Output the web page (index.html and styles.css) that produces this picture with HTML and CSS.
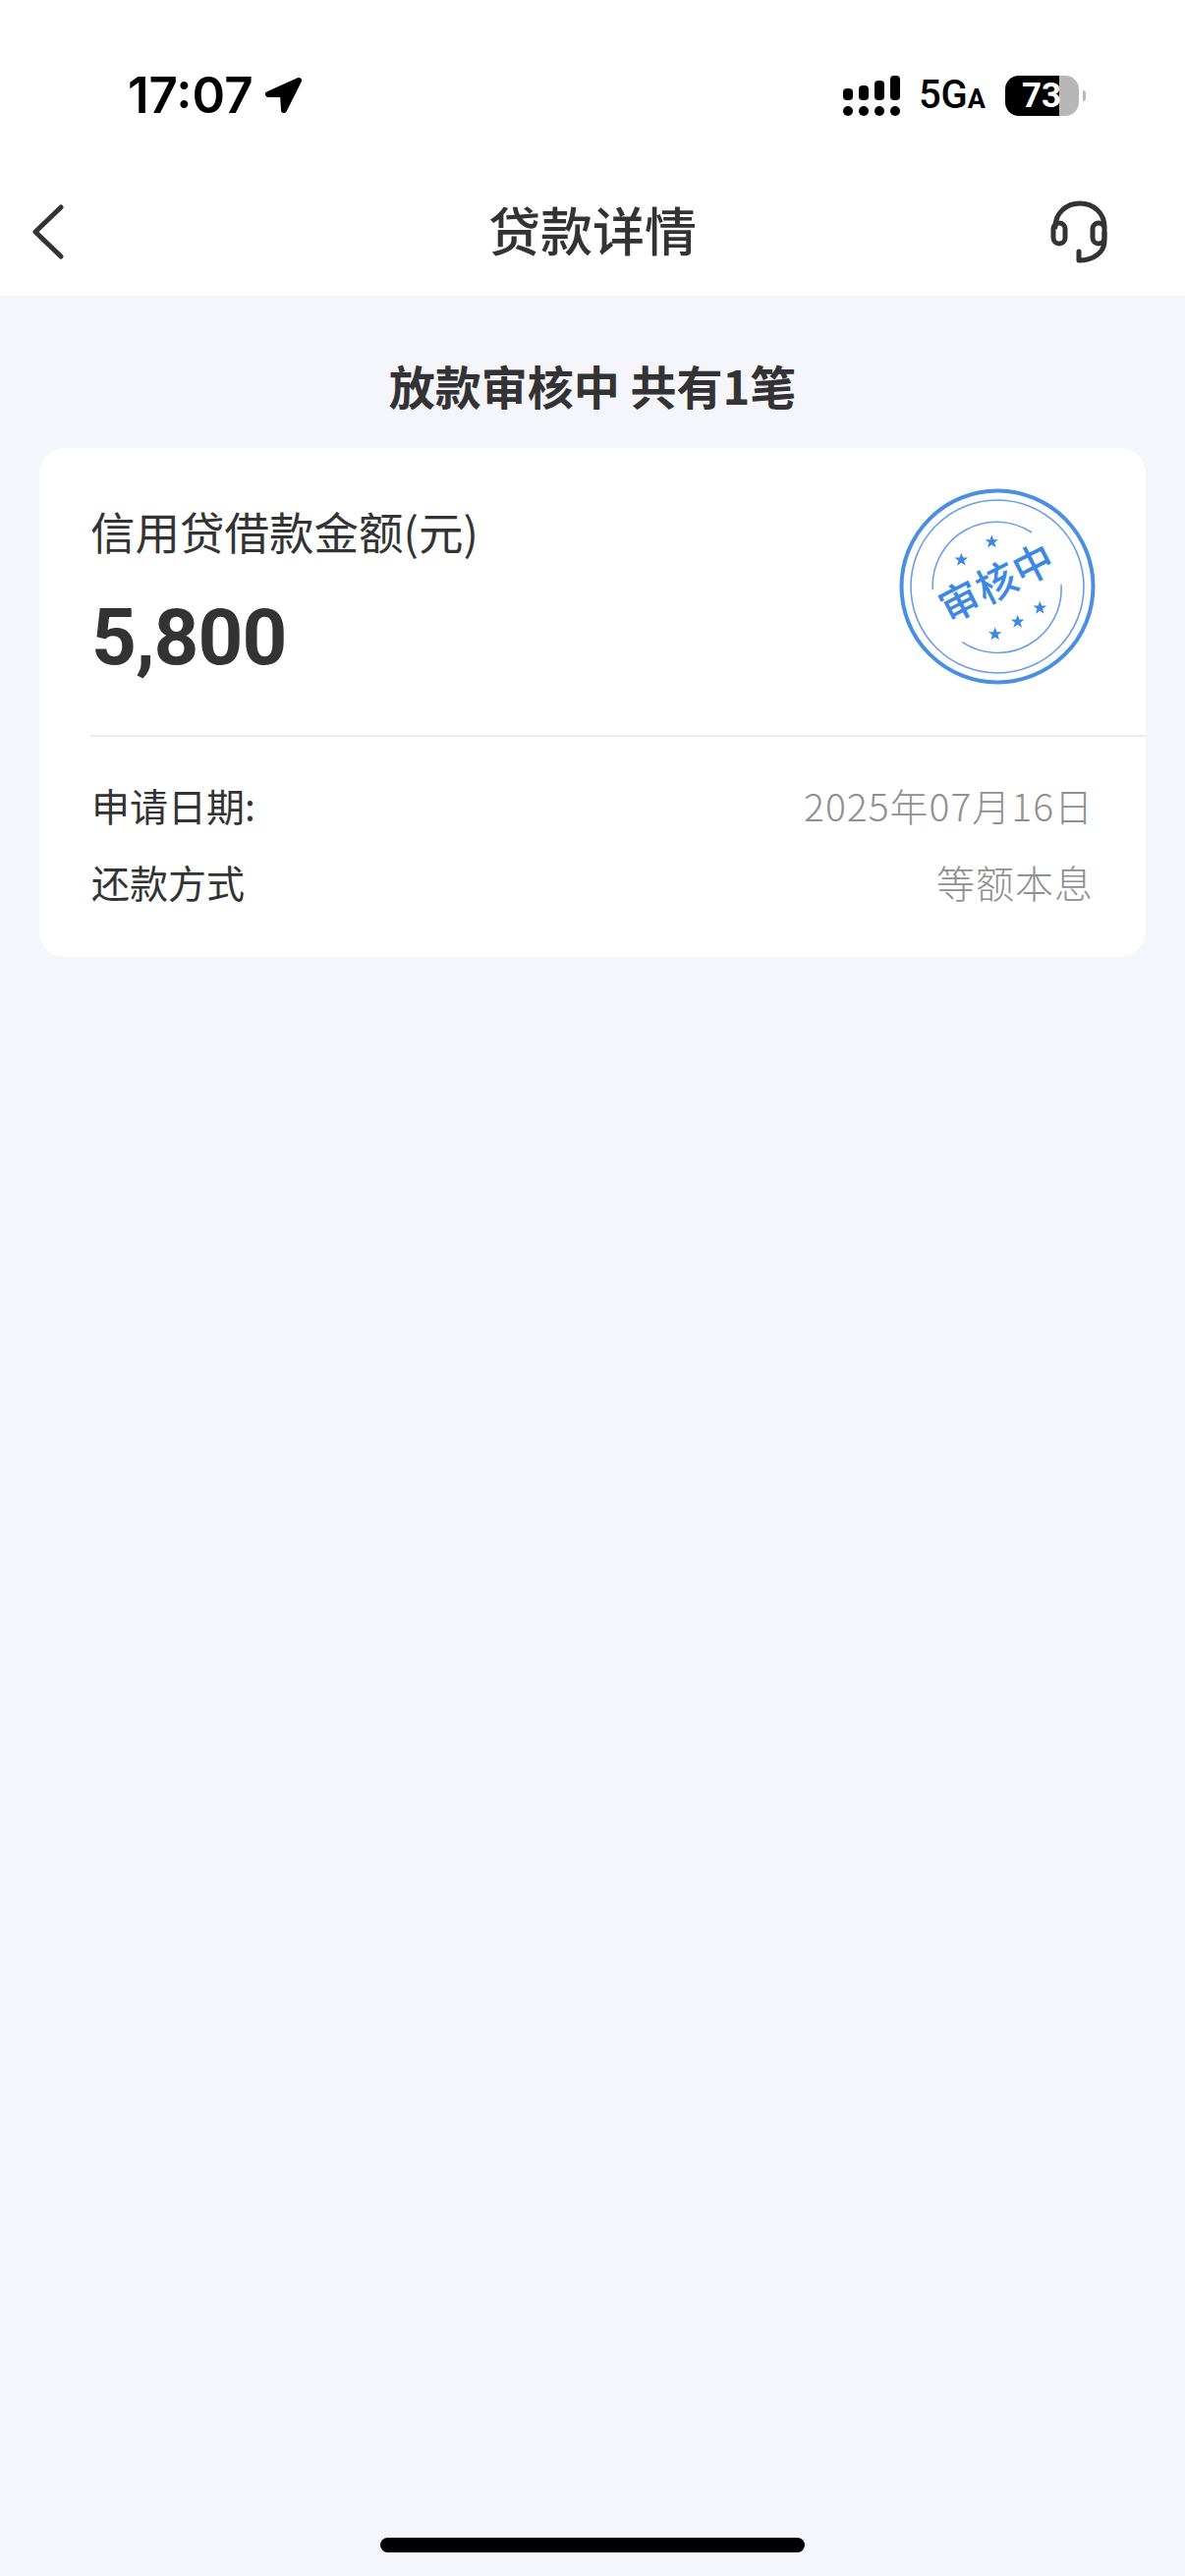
FILE: index.html
```html
<!DOCTYPE html>
<html lang="zh-CN">
<head>
<meta charset="utf-8">
<title>贷款详情</title>
<link rel="stylesheet" href="styles.css">
</head>
<body>
<div class="page">
  <header class="head">
    <div class="status">
      <div class="status-left">
        <span class="time">17:07</span>
        <svg class="loc" width="44" height="44" viewBox="0 0 44 44"><path d="M38 7 7 21h15l1 16z" fill="#000" stroke="#000" stroke-width="6" stroke-linejoin="round"/></svg>
      </div>
      <div class="status-right">
        <svg class="signal" width="58" height="41" viewBox="0 0 58 41">
          <rect x="0" y="13" width="10" height="12" rx="4"/><rect x="16" y="10" width="10" height="15" rx="4"/><rect x="32" y="5" width="10" height="20" rx="4"/><rect x="48" y="0" width="10" height="25" rx="4"/>
          <circle cx="5" cy="36" r="5"/><circle cx="21" cy="36" r="5"/><circle cx="37" cy="36" r="5"/><circle cx="53" cy="36" r="5"/>
        </svg>
        <span class="net">5G<span class="net-a">A</span></span>
        <div class="battery-wrap">
          <div class="battery">73</div>
          <span class="battery-tip"></span>
        </div>
      </div>
    </div>
    <nav class="nav">
      <svg class="back" width="36" height="60" viewBox="0 0 36 60"><path d="M31 5 5 30l26 25" fill="none" stroke="#333" stroke-width="5" stroke-linecap="round" stroke-linejoin="round"/></svg>
      <h1 class="nav-title">贷款详情</h1>
      <svg class="service" width="64" height="70" viewBox="0 0 64 70" fill="none" stroke="#333" stroke-width="5" stroke-linecap="round" stroke-linejoin="round">
        <path d="M7 30C7 16 18 6 32 6s25 10 25 24"/>
        <rect x="5" y="26" width="12" height="21" rx="6"/>
        <rect x="45" y="26" width="12" height="21" rx="6"/>
        <path d="M57 36v8c0 12-11 20-26 20V55"/>
      </svg>
    </nav>
  </header>
  <h2 class="summary">放款审核中 共有1笔</h2>
  <section class="card">
    <div class="card-top">
      <div class="amount-block">
        <div class="amount-label">信用贷借款金额(元)</div>
        <div class="amount">5,800</div>
      </div>
      <svg class="stamp" width="200" height="200" viewBox="0 0 200 200">
        <defs><path id="star" d="M0-7 1.800-2.100H6.800L2.800 1 4.300 6 0 3.100-4.300 6-2.800 1-6.800-2.100H-1.800z"/></defs>
        <circle class="stamp-line outer" cx="100" cy="100" r="97.500"/>
        <circle class="stamp-line inner" cx="100" cy="100" r="88"/>
        <path class="stamp-line inner" d="M135 45A65 65 0 0 0 34.300 103.300"/>
        <path class="stamp-line inner" d="M165 98.300A65 65 0 0 1 64.300 156.700"/>
        <use class="stamp-star" href="#star" x="94.300" y="54.300"/>
        <use class="stamp-star" href="#star" x="63.300" y="72.700"/>
        <use class="stamp-star" href="#star" x="143.300" y="121.700"/>
        <use class="stamp-star" href="#star" x="120.700" y="135.700"/>
        <use class="stamp-star" href="#star" x="97.700" y="148.300"/>
        <text class="stamp-text" x="100" y="111" text-anchor="middle" transform="rotate(-27 100 97)">审核中</text>
      </svg>
    </div>
    <div class="rows">
      <div class="row"><span class="row-key">申请日期:</span><span class="row-value">2025年07月16日</span></div>
      <div class="row"><span class="row-key">还款方式</span><span class="row-value">等额本息</span></div>
    </div>
  </section>
  <div class="home-bar"></div>
</div>
</body>
</html>
```
FILE: styles.css
```css
* { box-sizing: border-box; margin: 0; padding: 0; }
html, body { width: 1206px; height: 2622px; overflow: hidden; }
body {
  background: #f4f6fb;
  color: #333;
  font-family: "Noto Sans CJK SC", "Noto Sans", sans-serif;
}
.page { width: 1206px; height: 2622px; display: flex; flex-direction: column; }
.head { background: #fff; height: 301px; display: flex; flex-direction: column; }
.status {
  height: 170px;
  padding: 24px 101px 0 130px;
  display: flex;
  justify-content: space-between;
  align-items: center;
}
.status-left { display: flex; align-items: center; gap: 8px; }
.time {
  font-family: Inter, Roboto, sans-serif;
  font-weight: 600;
  font-size: 51px;
  line-height: 62px;
  color: #000;
}
.loc { display: block; }
.status-right { display: flex; align-items: center; }
.signal { display: block; fill: #000; margin-left: 2px; }
.net {
  margin: 4px 0 0 19px;
  font-family: Roboto, sans-serif;
  font-weight: 500;
  font-size: 40px;
  line-height: 44px;
  color: #000;
}
.net-a { font-size: 27px; font-weight: 700; }
.battery-wrap { margin-left: 20px; display: flex; align-items: center; gap: 4px; }
.battery {
  width: 75px;
  height: 41px;
  border-radius: 14px;
  background: linear-gradient(90deg, #000 0 55px, #b7b7b7 55px 75px);
  color: #fff;
  font-family: Roboto, sans-serif;
  font-weight: 700;
  font-size: 35px;
  line-height: 41px;
  padding-left: 17px;
}
.battery-tip {
  width: 3px;
  height: 11px;
  border-radius: 0 3px 3px 0;
  background: #b7b7b7;
}
.nav {
  height: 131px;
  padding: 0 75px;
  display: grid;
  grid-template-columns: 1fr auto 1fr;
  align-items: center;
}
.back { display: block; justify-self: start; margin-left: -44px; }
.service { display: block; justify-self: end; }
.nav-title {
  font-size: 53px;
  line-height: 70px;
  font-weight: 500;
  color: #333;
  margin-top: -5px;
}
.summary {
  padding: 61px 0 34px;
  text-align: center;
  font-size: 47px;
  line-height: 60px;
  font-weight: 700;
  color: #333;
}
.card {
  margin: 0 40px;
  height: 518px;
  background: #fff;
  border-radius: 26px;
}
.card-top {
  margin-left: 52px;
  height: 294px;
  padding-right: 51px;
  border-bottom: 2px solid #ebebeb;
  display: flex;
  justify-content: space-between;
  align-items: flex-start;
}
.amount-block { padding-top: 54px; }
.amount-label { font-size: 45.5px; line-height: 60px; font-weight: 400; color: #333; }
.amount {
  margin: 29px 0 0 1px;
  font-family: Roboto, sans-serif;
  font-weight: 700;
  font-size: 80px;
  line-height: 100px;
  color: #333;
  letter-spacing: -1px;
}
.stamp { display: block; margin-top: 41px; }
.stamp-line { fill: none; stroke: #4a8fe2; }
.outer { stroke-width: 4; }
.inner { stroke-width: 1.6; stroke: #6a9fe6; }
.stamp-star { fill: #3d88e3; }
.stamp-text {
  font-size: 41px;
  font-weight: 500;
  fill: #3d88e3;
  letter-spacing: 1px;
}
.rows { padding: 30px 53px 0 53px; }
.row {
  height: 78px;
  display: flex;
  justify-content: space-between;
  align-items: center;
  font-size: 39px;
  line-height: 56px;
}
.row-key { color: #333; }
.row-value { color: #909090; font-weight: 300; letter-spacing: 1px; }
.home-bar {
  width: 432px;
  height: 15px;
  margin: auto auto 24px;
  background: #000;
  border-radius: 8px;
}
```
